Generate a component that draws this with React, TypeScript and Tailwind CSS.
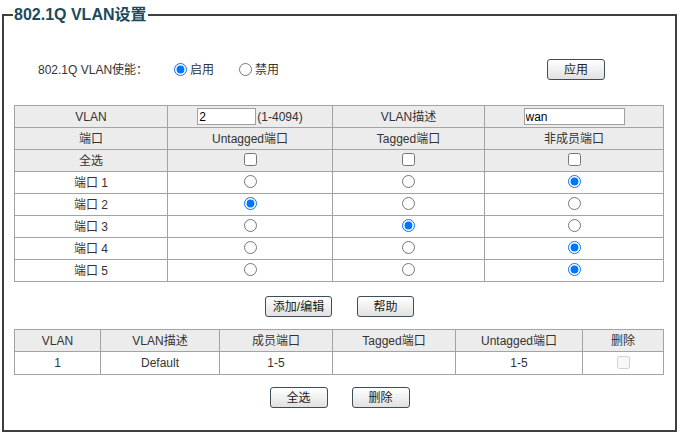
import React from "react";

const font = { fontFamily: '"Liberation Sans", Arial, "Noto Sans CJK SC", sans-serif' };

function Btn({ children, w }: { children: React.ReactNode; w: string }) {
  return (
    <button
      className={`${w} h-[21px] rounded-[3px] border border-[#3d4d5a] bg-gradient-to-b from-white to-[#e1e1e1] text-[12px] leading-none text-[#222]`}
    >
      {children}
    </button>
  );
}

const td = "border border-[#a3a3a3] text-center align-middle p-0";

export default function App() {
  const ports = [
    { name: "端口 1", sel: 2 },
    { name: "端口 2", sel: 0 },
    { name: "端口 3", sel: 1 },
    { name: "端口 4", sel: 2 },
    { name: "端口 5", sel: 2 },
  ];

  return (
    <div className="h-[434px] w-[681px] bg-white pl-[2px] pt-[5px] text-[12px] text-[#333]" style={font}>
      <fieldset className="h-[427px] w-[675px] border-2 border-[#3f3f3f] px-[10px]">
        <legend className="ml-[-1px] px-[1px] text-[16px] font-bold leading-[20px] text-[#1b4a5e]">
          802.1Q VLAN设置
        </legend>

        {/* enable row */}
        <div className="mt-[34px] flex h-[21px] items-center">
          <span className="ml-[24px] w-[136px]">802.1Q VLAN使能：</span>
          <label className="flex items-center">
            <input type="radio" name="en" defaultChecked className="m-0 h-[13px] w-[13px]" />
            <span className="ml-[3px]">启用</span>
          </label>
          <label className="ml-[25px] flex items-center">
            <input type="radio" name="en" className="m-0 h-[13px] w-[13px]" />
            <span className="ml-[3px]">禁用</span>
          </label>
          <div className="ml-auto mr-[60px]">
            <Btn w="w-[58px]">应用</Btn>
          </div>
        </div>

        {/* vlan edit table */}
        <table className="mt-[25px] w-[650px] table-fixed border-collapse">
          <colgroup>
            <col className="w-[153px]" />
            <col className="w-[165px]" />
            <col className="w-[152px]" />
            <col className="w-[179px]" />
          </colgroup>
          <tbody>
            <tr className="h-[22px] bg-[#ececec]">
              <td className={td}>VLAN</td>
              <td className={td}>
                <div className="flex items-center justify-center">
                  <input
                    defaultValue="2"
                    className="h-[17px] w-[59px] border border-[#a0a0a0] bg-white px-[1px] text-[12px] text-black outline-none"
                  />
                  <span className="ml-[1px]">(1-4094)</span>
                </div>
              </td>
              <td className={td}>VLAN描述</td>
              <td className={td}>
                <div className="flex justify-center">
                  <input
                    defaultValue="wan"
                    className="h-[17px] w-[101px] border border-[#a0a0a0] bg-white px-[1px] text-[12px] text-black outline-none"
                  />
                </div>
              </td>
            </tr>
            <tr className="h-[22px] bg-[#ececec]">
              <td className={td}>端口</td>
              <td className={td}>Untagged端口</td>
              <td className={td}>Tagged端口</td>
              <td className={td}>非成员端口</td>
            </tr>
            <tr className="h-[22px] bg-[#ececec]">
              <td className={td}>全选</td>
              {[0, 1, 2].map((i) => (
                <td key={i} className={td}>
                  <input type="checkbox" className="m-0 mt-[3px] h-[13px] w-[13px]" />
                </td>
              ))}
            </tr>
            {ports.map((p, r) => (
              <tr key={p.name} className="h-[22px] bg-white">
                <td className={td}>{p.name}</td>
                {[0, 1, 2].map((i) => (
                  <td key={i} className={td}>
                    <input
                      type="radio"
                      name={`p${r}`}
                      defaultChecked={p.sel === i}
                      className="m-0 mt-[3px] h-[13px] w-[13px]"
                    />
                  </td>
                ))}
              </tr>
            ))}
          </tbody>
        </table>

        <div className="mt-[14px] flex justify-center gap-[25px]">
          <Btn w="w-[67px]">添加/编辑</Btn>
          <Btn w="w-[57px]">帮助</Btn>
        </div>

        {/* vlan list */}
        <table className="mt-[12px] w-[650px] table-fixed border-collapse">
          <colgroup>
            <col className="w-[86px]" />
            <col className="w-[119px]" />
            <col className="w-[113px]" />
            <col className="w-[123px]" />
            <col className="w-[127px]" />
            <col className="w-[81px]" />
          </colgroup>
          <tbody>
            <tr className="h-[22px] bg-[#ececec]">
              <td className={td}>VLAN</td>
              <td className={td}>VLAN描述</td>
              <td className={td}>成员端口</td>
              <td className={td}>Tagged端口</td>
              <td className={td}>Untagged端口</td>
              <td className={td}>删除</td>
            </tr>
            <tr className="h-[23px] bg-white">
              <td className={td}>1</td>
              <td className={td}>Default</td>
              <td className={td}>1-5</td>
              <td className={td}></td>
              <td className={td}>1-5</td>
              <td className={td}>
                <input type="checkbox" disabled className="m-0 mt-[3px] h-[13px] w-[13px]" />
              </td>
            </tr>
          </tbody>
        </table>

        <div className="mt-[12px] flex justify-center gap-[24px]">
          <Btn w="w-[58px]">全选</Btn>
          <Btn w="w-[58px]">删除</Btn>
        </div>
      </fieldset>
    </div>
  );
}
